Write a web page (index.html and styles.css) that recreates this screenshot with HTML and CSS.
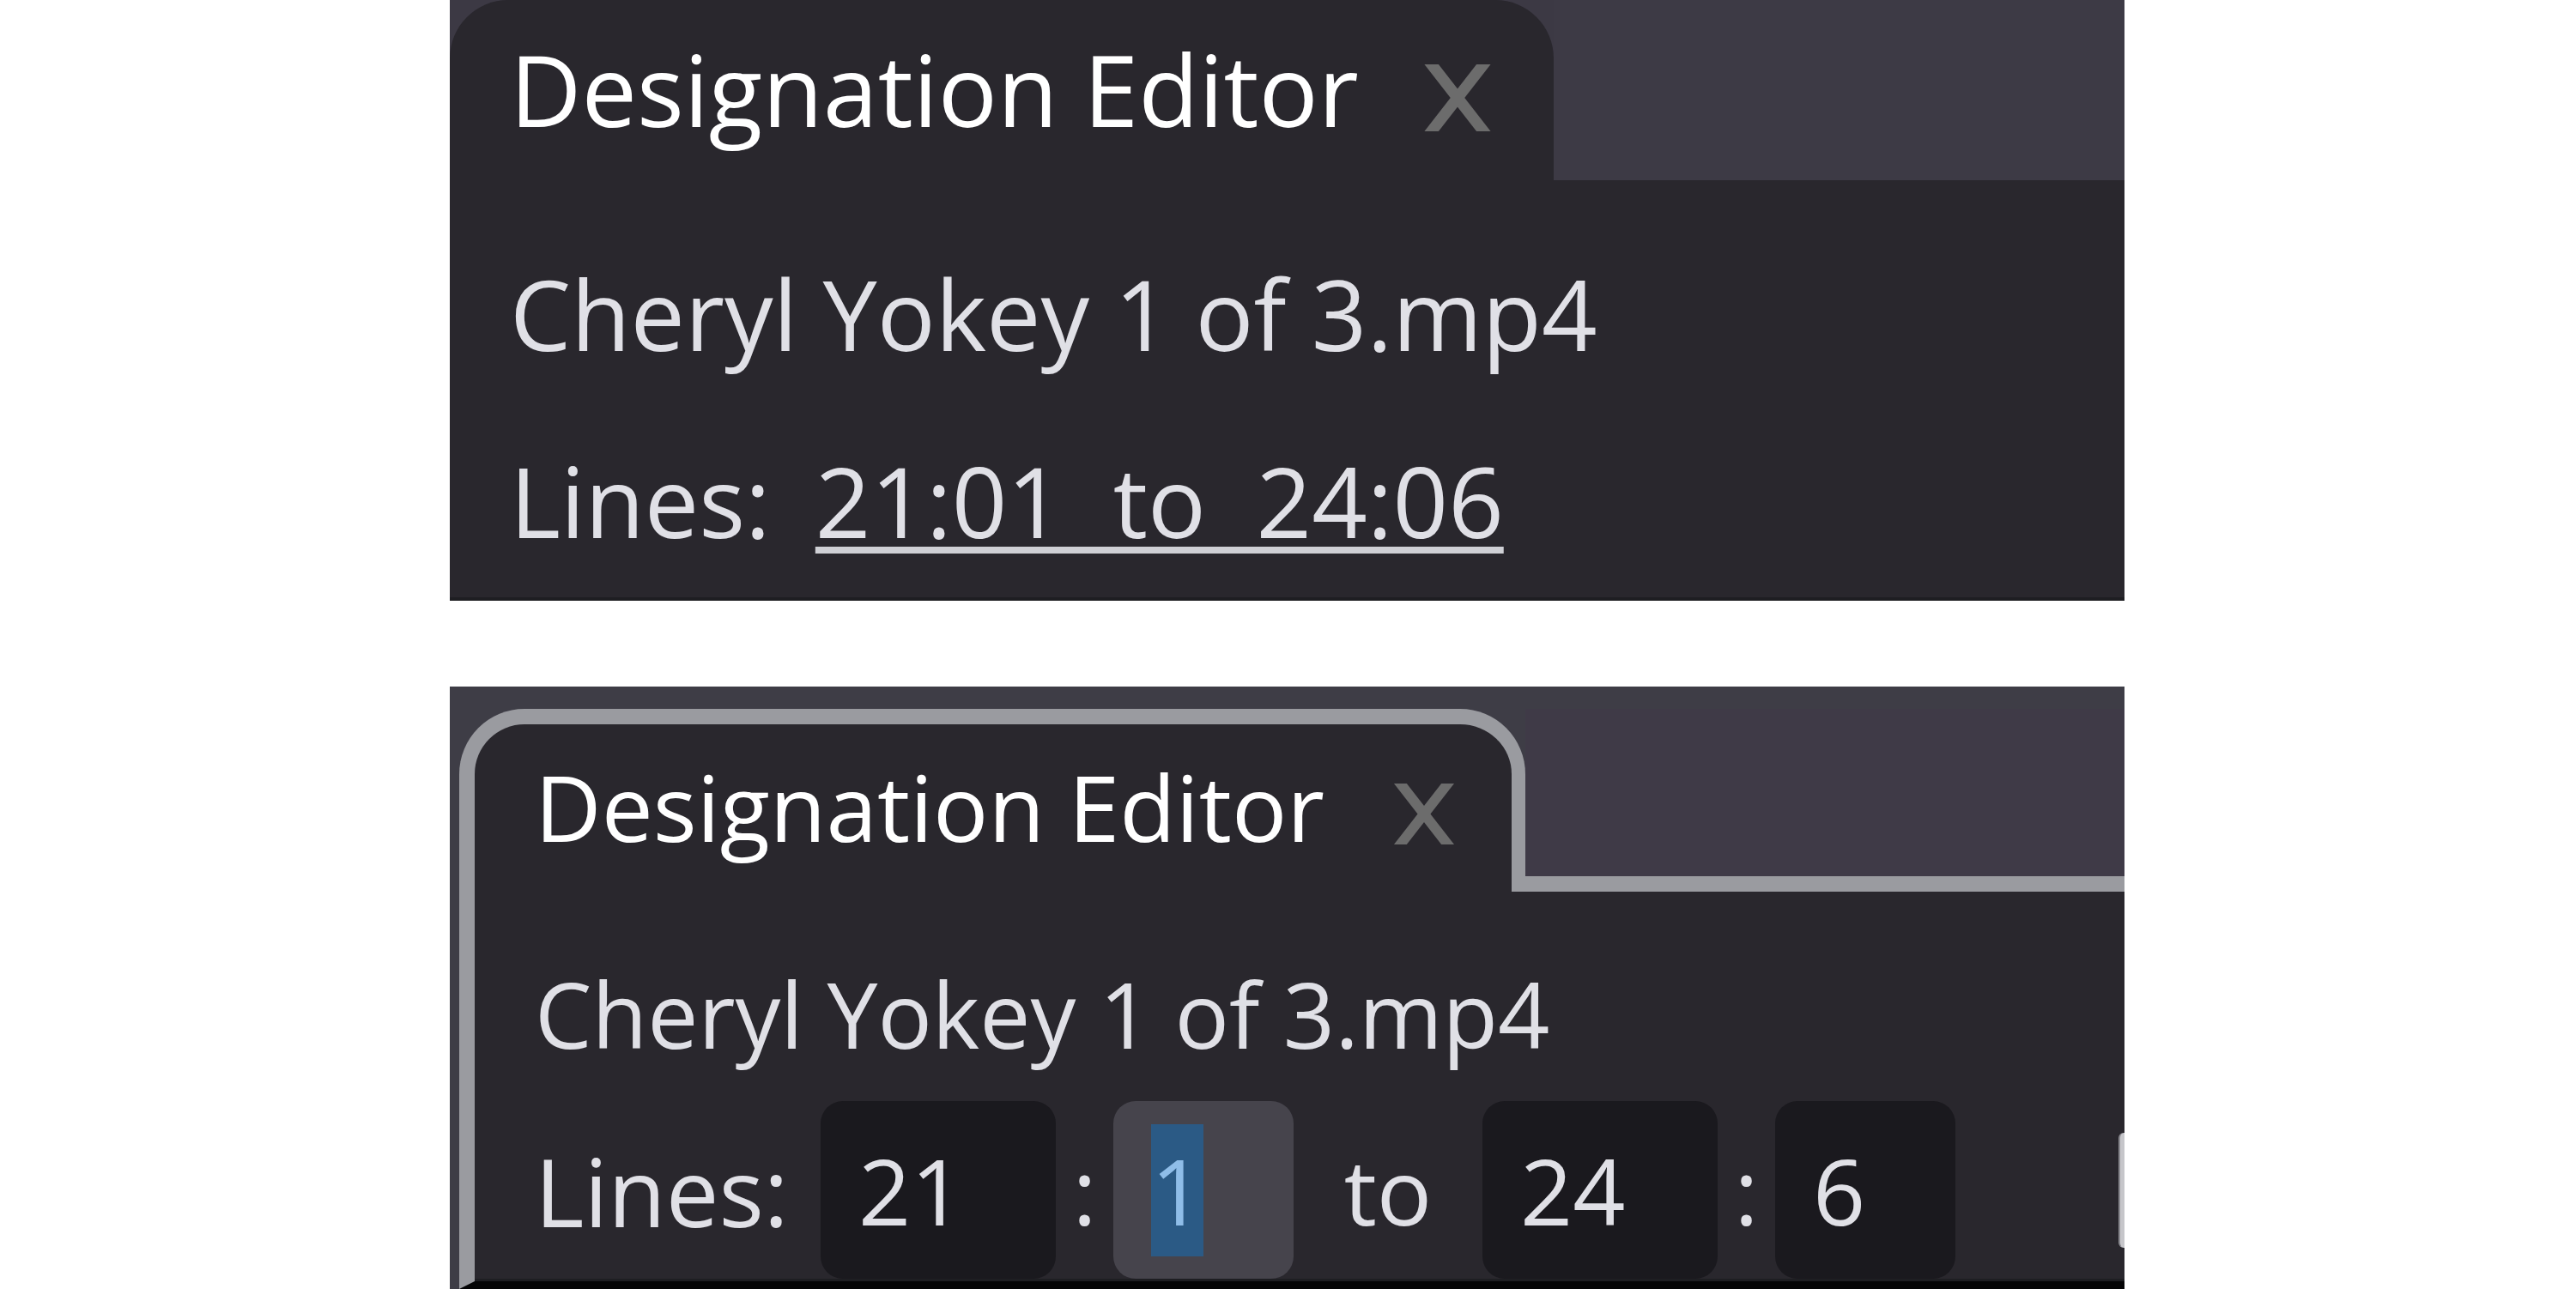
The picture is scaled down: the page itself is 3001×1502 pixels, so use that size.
FILE: index.html
```html
<!DOCTYPE html>
<html lang="en">
<head>
<meta charset="utf-8">
<title>Designation Editor</title>
<link rel="stylesheet" href="styles.css">
</head>
<body>
<main class="page">
  <section class="editor">
    <div class="tabbar">
      <div class="tab">
        <span class="tab-title">Designation Editor</span>
        <svg class="close" viewBox="0 0 82 78" aria-label="Close">
          <line x1="6" y1="-6" x2="76" y2="84"/>
          <line x1="76" y1="-6" x2="6" y2="84"/>
        </svg>
      </div>
      <div class="tab-fill"></div>
    </div>
    <div class="editor-body">
      <div class="file-name">Cheryl Yokey 1 of 3.mp4</div>
      <div class="lines">Lines:<span class="range">21:01  to  24:06</span></div>
    </div>
  </section>

  <section class="editor editor--focused">
    <div class="tabbar">
      <div class="tab">
        <span class="tab-title">Designation Editor</span>
        <svg class="close" viewBox="0 0 82 78" aria-label="Close">
          <line x1="6" y1="-6" x2="76" y2="84"/>
          <line x1="76" y1="-6" x2="6" y2="84"/>
        </svg>
      </div>
      <div class="tab-fill"></div>
    </div>
    <div class="editor-body">
      <div class="file-name">Cheryl Yokey 1 of 3.mp4</div>
      <div class="line-row">
        <span class="row-label">Lines:</span>
        <div class="num-box num-box--wide">21</div>
        <span class="row-sep">:</span>
        <div class="num-box num-box--active"><span class="selected">1</span></div>
        <span class="row-to">to</span>
        <div class="num-box num-box--wide">24</div>
        <span class="row-sep">:</span>
        <div class="num-box">6</div>
        <div class="edge-button"></div>
      </div>
    </div>
  </section>
</main>
</body>
</html>
```
FILE: styles.css
```css
html, body {
  margin: 0;
  padding: 0;
  background: #ffffff;
}

.page {
  display: flex;
  flex-direction: column;
  gap: 100px;
  padding-left: 524px;
  width: 1951px;
}

.editor {
  width: 1951px;
  background: #29272d;
  font-family: "Open Sans", "Noto Sans", sans-serif;
  overflow: hidden;
  border-bottom: 4px solid #1e1e22;
}

/* ---------- top (plain) editor ---------- */
.tabbar {
  display: flex;
  height: 210px;
  background: #3c3944;
}

.tab {
  box-sizing: border-box;
  width: 1286px;
  flex: 0 0 auto;
  display: flex;
  align-items: flex-start;
  padding: 46px 71px 0 70px;
  background: #29272d;
  border-radius: 68px 68px 0 0;
}

.tab-title {
  font-size: 115px;
  line-height: 115px;
  color: #ffffff;
  white-space: nowrap;
}

.close {
  width: 82px;
  height: 78px;
  margin-left: auto;
  margin-top: 29px;
  flex: 0 0 auto;
}

.close line {
  stroke: #6c6c6c;
  stroke-width: 13;
}

.tab-fill {
  flex: 1 1 auto;
  background: #3d3a45;
}

.editor-body {
  padding: 98px 0 55px 70px;
  color: #e0e0e6;
}

.file-name {
  font-size: 113px;
  line-height: 115px;
  white-space: nowrap;
}

.lines {
  margin-top: 103px;
  font-size: 113px;
  line-height: 115px;
  white-space: pre;
}

.range {
  margin-left: 52px;
  text-decoration: underline;
  text-decoration-thickness: 8px;
  text-underline-offset: 10px;
  text-decoration-color: #cfd0d5;
}

/* ---------- bottom (focused) editor ---------- */
.editor--focused {
  background: #3e3d46;
  padding: 26px 0 0 11px;
  border-bottom: 0;
  box-sizing: border-box;
}

.editor--focused .tabbar {
  height: 213px;
  background: transparent;
}

.editor--focused .tab {
  width: 1242px;
  padding: 42px 65px 0 70px;
  border: 18px solid #9a9ba0;
  border-right-width: 16px;
  border-bottom: 0;
  border-radius: 76px 76px 0 0;
  background: #29272d;
}

.editor--focused .tab-title {
  font-size: 107px;
  line-height: 107px;
}

.editor--focused .close {
  width: 74px;
  height: 71px;
  margin-top: 27px;
}

.editor--focused .tab-fill {
  box-sizing: border-box;
  background: #3f3a47;
  border-bottom: 18px solid #9a9ba0;
}

.editor--focused .editor-body {
  background: #29272d;
  border-left: 18px solid #9a9ba0;
  border-bottom: 9px solid #050506;
  padding: 89px 0 3px 70px;
  box-shadow: inset 0 -3px 0 #1e1e22;
}

.editor--focused .file-name {
  font-size: 105.5px;
  line-height: 107px;
}

.line-row {
  display: flex;
  align-items: center;
  height: 207px;
  margin-top: 48px;
  font-size: 107px;
  line-height: 154px;
  color: #e0e0e6;
  white-space: nowrap;
}

.line-row > * {
  flex: 0 0 auto;
}

.row-label {
  width: 333px;
  font-size: 110px;
}

.row-sep {
  width: 67px;
  text-align: center;
}

.row-to {
  width: 220px;
  text-align: center;
}

.num-box {
  box-sizing: border-box;
  width: 210px;
  height: 207px;
  display: flex;
  align-items: center;
  padding-left: 44px;
  border-radius: 26px;
  background: #1a191e;
}

.num-box--wide {
  width: 274px;
}

.num-box--active {
  background: #46444c;
}

.selected {
  display: inline-block;
  background: #2b5a85;
  color: #8fbde8;
  line-height: 154px;
}

.edge-button {
  box-sizing: border-box;
  width: 60px;
  height: 134px;
  margin-left: 190px;
  background: #c6c6ca;
  border-left: 2px solid #8a8a90;
  border-radius: 6px 0 0 6px;
}
```
